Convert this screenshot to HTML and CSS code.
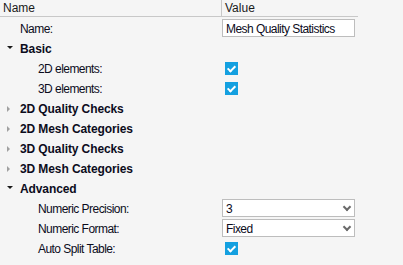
FILE: index.html
```html
<!DOCTYPE html>
<html lang="en">
<head>
  <meta charset="UTF-8" />
  <title>Mesh Quality Statistics</title>
  <link rel="stylesheet" href="styles.css">
</head>
<body>
  <div class="tree">
    <div class="head">
      <div class="col-name">Name</div>
      <div class="col-value">Value</div>
    </div>

    <div class="body">
      <div class="row">
        <div class="label lvl0">Name:</div>
        <div class="value"><div class="field">Mesh Quality Statistics</div></div>
      </div>

      <div class="row group">
        <div class="label"><span class="arrow open"></span>Basic</div>
      </div>
      <div class="row">
        <div class="label lvl1">2D elements:</div>
        <div class="value"><span class="check"></span></div>
      </div>
      <div class="row">
        <div class="label lvl1">3D elements:</div>
        <div class="value"><span class="check"></span></div>
      </div>

      <div class="row group">
        <div class="label"><span class="arrow closed"></span>2D Quality Checks</div>
      </div>
      <div class="row group">
        <div class="label"><span class="arrow closed"></span>2D Mesh Categories</div>
      </div>
      <div class="row group">
        <div class="label"><span class="arrow closed"></span>3D Quality Checks</div>
      </div>
      <div class="row group">
        <div class="label"><span class="arrow closed"></span>3D Mesh Categories</div>
      </div>

      <div class="row group">
        <div class="label"><span class="arrow open"></span>Advanced</div>
      </div>
      <div class="row">
        <div class="label lvl1">Numeric Precision:</div>
        <div class="value"><div class="field select">3<span class="caret"></span></div></div>
      </div>
      <div class="row">
        <div class="label lvl1">Numeric Format:</div>
        <div class="value"><div class="field select">Fixed<span class="caret"></span></div></div>
      </div>
      <div class="row">
        <div class="label lvl1">Auto Split Table:</div>
        <div class="value"><span class="check"></span></div>
      </div>
    </div>
  </div>
</body>
</html>
```

FILE: styles.css
```css
* {
  box-sizing: border-box;
}

body {
  margin: 0;
  background: #f5f5f5;
  font-family: 'Liberation Sans', Arial, sans-serif;
  font-size: 12px;
  color: #0c0c1c;
}

.tree {
  width: 358px;
}

.head {
  display: flex;
  height: 17px;
  border-bottom: 1px solid #c8c8c8;
  line-height: 16px;
  color: #1a1a1a;
}

.col-name {
  width: 222px;
  padding-left: 3px;
  border-right: 1px solid #c8c8c8;
}

.col-value {
  padding-left: 3px;
}

.body {
  padding-top: 1px;
}

.row {
  display: flex;
  height: 20px;
  align-items: center;
}

.label {
  width: 222px;
  height: 20px;
  padding-top: 2px;
  display: flex;
  align-items: center;
  letter-spacing: -0.55px;
}

.lvl0 {
  padding-left: 20px;
}

.lvl1 {
  padding-left: 38px;
}

.group .label {
  font-weight: bold;
  letter-spacing: -0.1px;
  padding-left: 7px;
}

.arrow {
  width: 13px;
  height: 6px;
  position: relative;
}

.arrow.open::before {
  content: "";
  position: absolute;
  left: 0;
  top: 0;
  border-left: 3px solid transparent;
  border-right: 3px solid transparent;
  border-top: 3px solid #1a1a1a;
}

.arrow.closed::before {
  content: "";
  position: absolute;
  left: 0;
  top: 0;
  border-top: 3px solid transparent;
  border-bottom: 3px solid transparent;
  border-left: 3px solid #a0a0a0;
}

.value {
  flex: 1;
  display: flex;
  align-items: center;
}

.field {
  width: 133px;
  height: 18px;
  border: 1px solid #bdbdbd;
  background: #fff;
  padding-left: 3px;
  padding-top: 1px;
  line-height: 16px;
  letter-spacing: -0.55px;
  position: relative;
}

.caret {
  position: absolute;
  right: 4px;
  top: 6px;
  width: 7px;
  height: 5px;
}

.caret::before {
  content: "";
  position: absolute;
  left: 0;
  top: 0;
  width: 4px;
  height: 4px;
  border-right: 2px solid #6a6a6a;
  border-bottom: 2px solid #6a6a6a;
  transform: translate(1px, -2px) rotate(45deg);
}

.check {
  width: 13px;
  height: 13px;
  margin-left: 3px;
  background: #14a0e0;
  position: relative;
}

.check::before {
  content: "";
  position: absolute;
  left: 4px;
  top: 2px;
  width: 3px;
  height: 6px;
  border-right: 2px solid #fff;
  border-bottom: 2px solid #fff;
  transform: rotate(45deg);
}
```
